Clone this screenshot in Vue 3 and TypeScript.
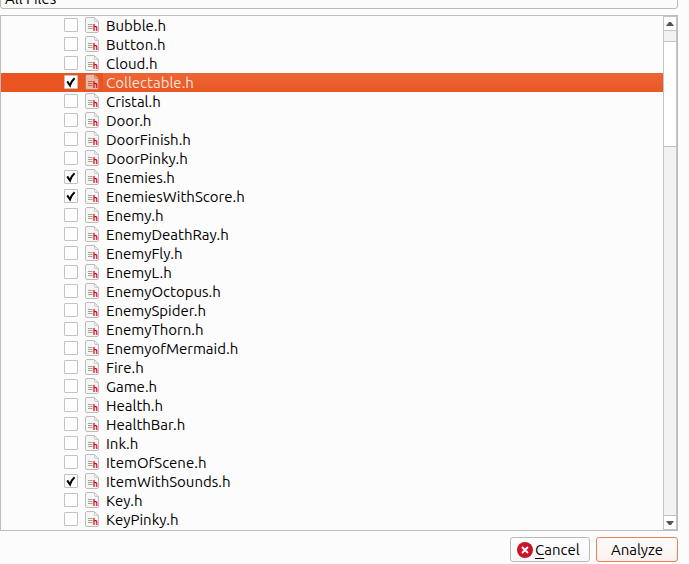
<script setup lang="ts">
import { ref } from 'vue'

interface FileItem {
  name: string
  checked: boolean
}

const names: string[] = [
  'Bubble.h', 'Button.h', 'Cloud.h', 'Collectable.h', 'Cristal.h', 'Door.h',
  'DoorFinish.h', 'DoorPinky.h', 'Enemies.h', 'EnemiesWithScore.h', 'Enemy.h',
  'EnemyDeathRay.h', 'EnemyFly.h', 'EnemyL.h', 'EnemyOctopus.h', 'EnemySpider.h',
  'EnemyThorn.h', 'EnemyofMermaid.h', 'Fire.h', 'Game.h', 'Health.h',
  'HealthBar.h', 'Ink.h', 'ItemOfScene.h', 'ItemWithSounds.h', 'Key.h', 'KeyPinky.h',
]
const initiallyChecked = ['Collectable.h', 'Enemies.h', 'EnemiesWithScore.h', 'ItemWithSounds.h']

const files = ref<FileItem[]>(
  names.map((name) => ({ name, checked: initiallyChecked.includes(name) })),
)
const selected = ref('Collectable.h')
const filter = ref('All Files')
</script>

<template>
  <main class="dialog">
    <select v-model="filter" class="filter" aria-label="File filter">
      <option>All Files</option>
    </select>

    <section class="tree">
      <ul class="rows">
        <li
          v-for="file in files"
          :key="file.name"
          class="row"
          :class="{ selected: file.name === selected }"
          @click="selected = file.name"
        >
          <label class="item">
            <input v-model="file.checked" type="checkbox" class="native" />
            <span class="box">
              <svg v-if="file.checked" viewBox="0 0 14 14" width="14" height="14">
                <path d="M3.2 6.4 L6 10.4 Q7.4 6 10.6 3.2" fill="none" stroke="#000" stroke-width="2" />
              </svg>
            </span>
            <svg class="icon" viewBox="0 0 14 16" width="14" height="16">
              <path class="page" d="M2 .5H9.5L13.5 4.5V14Q13.5 15.5 12 15.5H2Q.5 15.5 .5 14V2Q.5 .5 2 .5Z" />
              <path class="fold" d="M9.5 .5V3.5Q9.5 4.5 10.5 4.5H13.5Z" />
              <path class="lines" d="M3 7.5H7.5M3 9.5H7.5M3 11.5H7.5" />
              <text x="7.8" y="14" class="letter">h</text>
            </svg>
            <span class="name">{{ file.name }}</span>
          </label>
        </li>
      </ul>
      <div class="scrollbar">
        <button type="button" class="arrow up" aria-label="Scroll up">
          <svg viewBox="0 0 8 4" width="8" height="4"><path d="M0 4L3 0H5L8 4Z" fill="#555" /></svg>
        </button>
        <div class="track">
          <div class="thumb"></div>
        </div>
        <button type="button" class="arrow down" aria-label="Scroll down">
          <svg viewBox="0 0 8 4" width="8" height="4"><path d="M0 0H8L5 4H3Z" fill="#555" /></svg>
        </button>
      </div>
    </section>

    <footer class="actions">
      <button type="button" class="btn cancel">
        <svg viewBox="0 0 16 16" width="16" height="16">
          <circle cx="8" cy="8" r="8" fill="#c7162b" />
          <path d="M5 5L11 11M11 5L5 11" stroke="#fff" stroke-width="1.8" />
        </svg>
        <span><u>C</u>ancel</span>
      </button>
      <button type="button" class="btn analyze">Analyze</button>
    </footer>
  </main>
</template>

<style>
body {
  background: #fcfcfc;
  overflow: hidden;
}
</style>

<style scoped>
.dialog {
  display: flex;
  flex-direction: column;
  gap: 6px;
  margin-top: -19px;
  padding-right: 11px;
  font-family: Ubuntu, "Noto Sans", sans-serif;
  font-size: 15px;
  color: #000;
}

.filter {
  appearance: none;
  width: 100%;
  height: 28px;
  box-sizing: border-box;
  margin: 0;
  padding: 6px 4px 0;
  border: 1px solid #b9b9b9;
  border-radius: 3px;
  background: #fbfbfb;
  font: inherit;
  color: inherit;
}

.tree {
  display: flex;
  border: 1px solid #bdbdbd;
  background: #fcfcfc;
}

.rows {
  flex: 1;
  margin: 0;
  padding: 0 0 1px;
  list-style: none;
}

.row {
  height: 19px;
  padding-left: 63px;
}

.item {
  display: flex;
  align-items: flex-start;
  gap: 7px;
  height: 19px;
  position: relative;
}

.native {
  position: absolute;
  left: 0;
  width: 14px;
  height: 14px;
  margin: 0;
  opacity: 0;
}

.box {
  box-sizing: border-box;
  width: 14px;
  height: 14px;
  margin-top: 2px;
  border: 1px solid #c3c3c3;
  border-radius: 1px;
  background: #fdfdfd;
}

.box svg {
  display: block;
  margin: -1px;
}

.icon {
  display: block;
  margin-top: 1px;
}

.page {
  fill: #f6f6f6;
  stroke: #bcbcbc;
}

.fold {
  fill: #ececec;
  stroke: #c8c8c8;
}

.lines {
  fill: none;
  stroke: #a0a0a0;
}

.letter {
  fill: #e00008;
  font: bold 9px Ubuntu, "Liberation Sans", sans-serif;
}

.name {
  line-height: 19px;
}

.selected {
  background: linear-gradient(#ed6636, #e95724);
  background-color: #e95420;
  background-repeat: no-repeat;
  background-position: 102px 0;
  color: #fbe3d8;
}

.selected .page {
  fill: #f0b8a4;
  stroke: #c07a62;
}

.selected .fold {
  fill: #eaa58d;
  stroke: #c98266;
}

.selected .lines {
  stroke: #ad6f5c;
}

.scrollbar {
  display: flex;
  flex-direction: column;
  box-sizing: border-box;
  width: 14px;
  border: 1px solid #c3c3c3;
}

.arrow {
  display: flex;
  align-items: center;
  justify-content: center;
  height: 13px;
  padding: 0;
  border: 0;
  background: #fff;
}

.track {
  flex: 1;
  padding-top: 10px;
  border: solid #c3c3c3;
  border-width: 1px 0;
  background: #f2f2f2;
}

.thumb {
  box-sizing: border-box;
  height: 106px;
  border: solid #c3c3c3;
  border-width: 1px 0;
  background: #fff;
}

.actions {
  display: flex;
  justify-content: flex-end;
  gap: 6px;
}

.btn {
  display: flex;
  align-items: center;
  justify-content: center;
  gap: 2px;
  box-sizing: border-box;
  height: 25px;
  min-width: 80px;
  padding: 0 6px;
  border: 1px solid #b9b9b9;
  border-radius: 3px;
  background: linear-gradient(#fff, #f8f8f8);
  font: inherit;
  color: inherit;
}

.btn u {
  text-underline-offset: 3px;
}

.cancel {
  justify-content: flex-start;
}

.analyze {
  min-width: 82px;
  border-color: #ec7f5c;
  background: linear-gradient(#fefcfb, #fbf1ee);
}
</style>
